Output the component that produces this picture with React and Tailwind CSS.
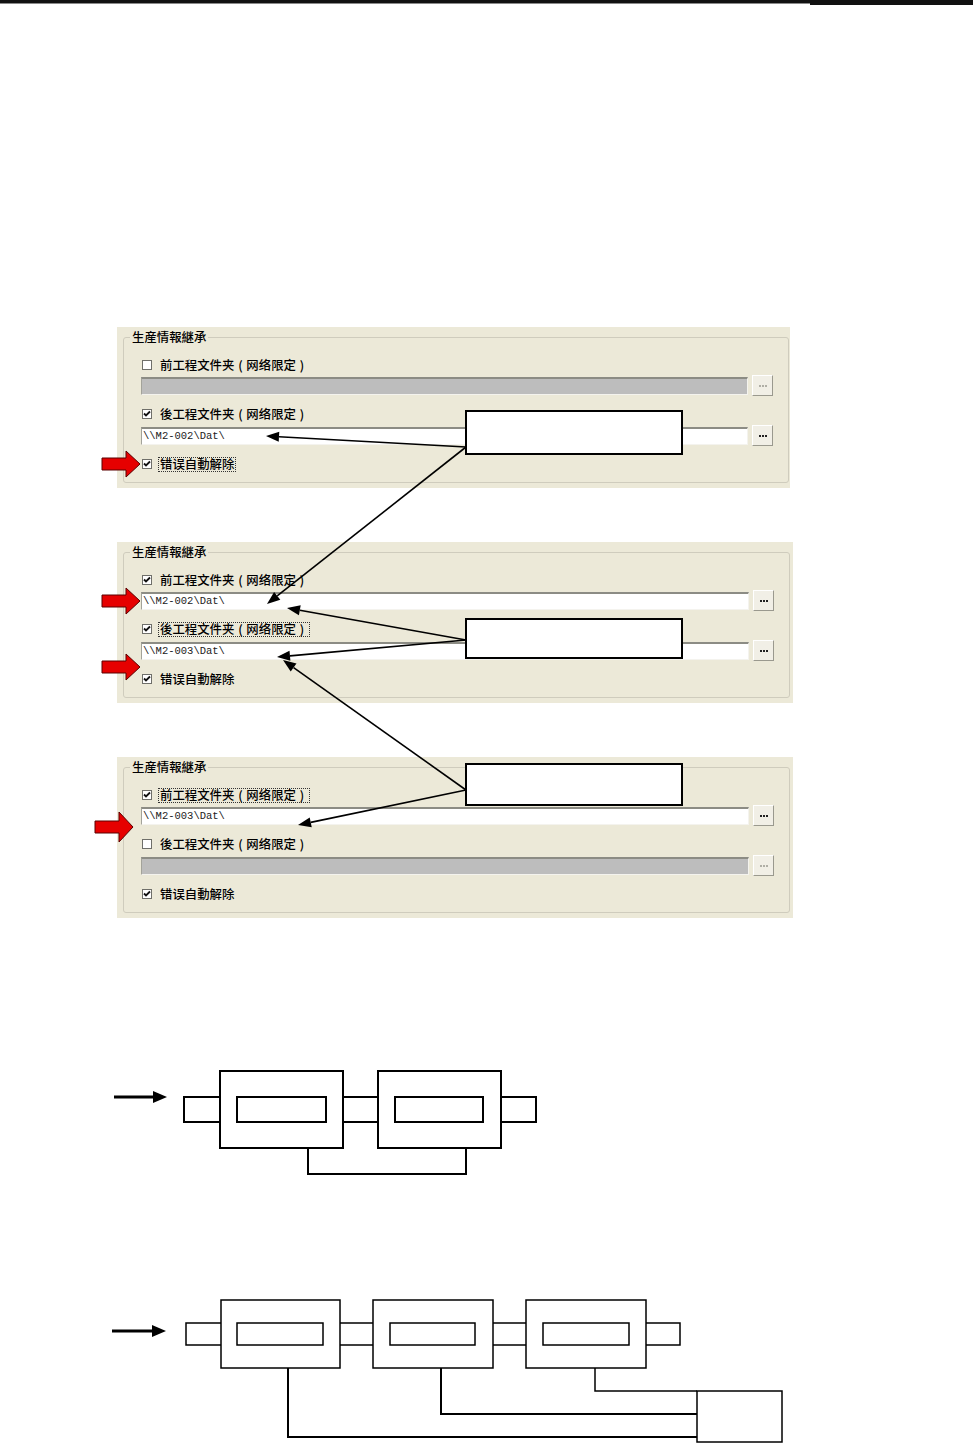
import React from "react";

const P2 = "\\\\M2-002\\Dat\\";
const P3 = "\\\\M2-003\\Dat\\";

const PANELS = [
  {
    wide: false,
    rows: [
      { label: "前工程文件夹（网络限定）", checked: false, path: null },
      { label: "後工程文件夹（网络限定）", checked: true, path: P2 },
    ],
    focus: 2,
  },
  {
    wide: true,
    rows: [
      { label: "前工程文件夹（网络限定）", checked: true, path: P2 },
      { label: "後工程文件夹（网络限定）", checked: true, path: P3 },
    ],
    focus: 1,
  },
  {
    wide: true,
    rows: [
      { label: "前工程文件夹（网络限定）", checked: true, path: P3 },
      { label: "後工程文件夹（网络限定）", checked: false, path: null },
    ],
    focus: 0,
  },
];

/* ================= ARROWHEAD ================= */
const arrow = (x1, y1, x2, y2, len = 13, half = 5) => {
  const dx = x2 - x1;
  const dy = y2 - y1;
  const d = Math.hypot(dx, dy);
  const ux = dx / d;
  const uy = dy / d;
  const bx = x2 - ux * len;
  const by = y2 - uy * len;
  return {
    line: { x1, y1, x2: bx, y2: by },
    head: `${x2},${y2} ${bx - uy * half},${by + ux * half} ${bx + uy * half},${by - ux * half}`,
  };
};

const redArrow = (tx, ty, hh = 13) => {
  const hb = tx - 14;
  const l = tx - 38;
  return `${l},${ty - 6} ${hb},${ty - 6} ${hb},${ty - hh} ${tx},${ty} ${hb},${ty + hh} ${hb},${ty + 6} ${l},${ty + 6}`;
};

const LINKS = [
  [466, 447, 266, 436],
  [466, 447, 267, 604],
  [466, 640, 287, 608],
  [466, 640, 277, 657],
  [466, 790, 283, 660],
  [466, 790, 298, 825],
];

const Check = ({ checked }) => (
  <div className="w-[10px] h-[10px] bg-white border border-[#6f6f6a] flex items-center justify-center shrink-0">
    {checked && (
      <svg width="8" height="8" viewBox="0 0 8 8">
        <path d="M1 3.5 L3 5.5 L7 1.5" stroke="#111" strokeWidth="1.8" fill="none" />
      </svg>
    )}
  </div>
);

// full-width parens drawn centred in a 12px cell, like the old dialog font
const LabelText = ({ text }) =>
  [...text].map((ch, i) =>
    ch === "（" || ch === "）" ? (
      <span key={i} className="inline-block w-[12px] text-center">
        {ch === "（" ? "(" : ")"}
      </span>
    ) : (
      <span key={i}>{ch}</span>
    ),
  );

const Label = ({ text, checked, focus }) => (
  <div className="flex items-center h-[14px] pl-[18px]">
    <Check checked={checked} />
    <span
      className={`ml-[6px] flex text-[12.4px] leading-[13px] text-black font-medium px-px ${
        focus ? "border border-dotted border-[#333]" : "border border-transparent"
      }`}
    >
      <LabelText text={text} />
    </span>
  </div>
);

const Field = ({ path }) => (
  <div className="flex items-center h-[21px] pl-[17px] gap-[4px]">
    <div
      className={`flex-1 h-[18px] flex items-center border-t-2 border-l border-t-[#8c8c84] border-l-[#a3a39a] border-b border-r border-b-[#f4f3ee] border-r-[#f4f3ee] ${
        path ? "bg-white" : "bg-[#bdbdbd]"
      }`}
    >
      {path && (
        <span className="pl-[1px] font-['Liberation_Mono',monospace] text-[10.5px] leading-none text-[#222]">
          {path}
        </span>
      )}
    </div>
    <div className="w-[21px] h-[21px] bg-[#f1efe6] border border-t-white border-l-white border-b-[#9a998e] border-r-[#9a998e] flex items-center justify-center gap-[1px]">
      {[0, 1, 2].map((i) => (
        <div
          key={i}
          className={`w-[2px] h-[2px] ${path ? "bg-[#222]" : "bg-[#b0afa6]"}`}
        />
      ))}
    </div>
  </div>
);

const Panel = ({ panel }) => (
  <div
    className={`ml-[117px] h-[161px] bg-[#ECE9D8] pl-[6px] pt-[3px] ${
      panel.wide ? "w-[676px] pr-[3px]" : "w-[673px] pr-[1px]"
    }`}
  >
    <fieldset className="h-[153px] border border-[#cfccbd] rounded-[3px] pr-[15px]">
      <legend className="ml-[6px] px-[2px] text-[12.4px] leading-[14px] text-black font-medium">
        生産情報継承
      </legend>
      <div className="mt-[14px]">
        <Label text={panel.rows[0].label} checked={panel.rows[0].checked} focus={panel.focus === 0} />
      </div>
      <div className="mt-[3px]">
        <Field path={panel.rows[0].path} />
      </div>
      <div className="mt-[11px]">
        <Label text={panel.rows[1].label} checked={panel.rows[1].checked} focus={panel.focus === 1} />
      </div>
      <div className="mt-[4px]">
        <Field path={panel.rows[1].path} />
      </div>
      <div className="mt-[11px]">
        <Label text="错误自動解除" checked focus={panel.focus === 2} />
      </div>
    </fieldset>
  </div>
);

const DiagramTwo = () => (
  <svg width="450" height="125" viewBox="100 1060 450 125" className="block ml-[100px]">
    <g stroke="#000" strokeWidth="2" fill="none">
      <line x1="114" y1="1097" x2="154" y2="1097" strokeWidth="3" />
      <path d="M220 1097 H184 V1122 H220" />
      <rect x="220" y="1071" width="123" height="77" />
      <rect x="237" y="1097" width="89" height="25" />
      <path d="M343 1097 H378 M343 1122 H378" />
      <rect x="378" y="1071" width="123" height="77" />
      <rect x="395" y="1097" width="88" height="25" />
      <path d="M501 1097 H536 V1122 H501" />
      <path d="M308 1148 V1174 H466 V1148" />
    </g>
    <polygon points="153,1091 167,1097 153,1103" fill="#000" />
  </svg>
);

const DiagramThree = () => (
  <svg width="700" height="153" viewBox="100 1290 700 153" className="block ml-[100px]">
    <g stroke="#000" strokeWidth="1.5" fill="none">
      <line x1="112" y1="1331" x2="154" y2="1331" strokeWidth="3" />
      <path d="M221 1323 H186 V1345 H221" />
      <rect x="221" y="1300" width="119" height="68" />
      <rect x="237" y="1323" width="86" height="22" />
      <path d="M340 1323 H373 M340 1345 H373" />
      <rect x="373" y="1300" width="120" height="68" />
      <rect x="390" y="1323" width="85" height="22" />
      <path d="M493 1323 H526 M493 1345 H526" />
      <rect x="526" y="1300" width="120" height="68" />
      <rect x="543" y="1323" width="86" height="22" />
      <path d="M646 1323 H680 V1345 H646" />
      <rect x="697" y="1391" width="85" height="51" />
      <path d="M595 1368 V1391 H697" />
      <path d="M441 1368 V1414 H697" strokeWidth="2" />
      <path d="M288 1368 V1437 H697" strokeWidth="2" />
    </g>
    <polygon points="152,1325 166,1331 152,1337" fill="#000" />
  </svg>
);

const App = () => {
  return (
    <div className="relative w-[973px] min-h-[1443px] bg-white font-['Noto_Sans_CJK_SC','Noto_Sans_CJK_JP',sans-serif] overflow-hidden">
      {/* TOP RULE */}
      <div className="flex">
        <div className="flex-1 h-[4px] border-t-[3px] border-t-[#111] border-b border-b-[#8a8a8a]" />
        <div className="w-[163px] h-[5px] bg-[#111]" />
      </div>

      {/* PANELS */}
      <div className="mt-[322px]">
        <Panel panel={PANELS[0]} />
      </div>
      <div className="mt-[54px]">
        <Panel panel={PANELS[1]} />
      </div>
      <div className="mt-[54px]">
        <Panel panel={PANELS[2]} />
      </div>

      {/* DIAGRAMS */}
      <div className="mt-[142px]">
        <DiagramTwo />
      </div>
      <div className="mt-[105px]">
        <DiagramThree />
      </div>

      {/* ANNOTATIONS */}
      <svg
        className="absolute top-0 left-0 pointer-events-none"
        width="973"
        height="1443"
        viewBox="0 0 973 1443"
      >
        {LINKS.map(([x1, y1, x2, y2], i) => {
          const a = arrow(x1, y1, x2, y2);
          return (
            <g key={i}>
              <line {...a.line} stroke="#000" strokeWidth="1.6" />
              <polygon points={a.head} fill="#000" />
            </g>
          );
        })}
        <g fill="#fff" stroke="#000" strokeWidth="2">
          <rect x="466" y="411" width="216" height="43" />
          <rect x="466" y="619" width="216" height="39" />
          <rect x="466" y="764" width="216" height="41" />
        </g>
        <g fill="#e60000" stroke="#5a0000" strokeWidth="1">
          <polygon points={redArrow(140, 464)} />
          <polygon points={redArrow(140, 601)} />
          <polygon points={redArrow(140, 667)} />
          <polygon points={redArrow(133, 827, 15)} />
        </g>
      </svg>
    </div>
  );
};

export default App;
